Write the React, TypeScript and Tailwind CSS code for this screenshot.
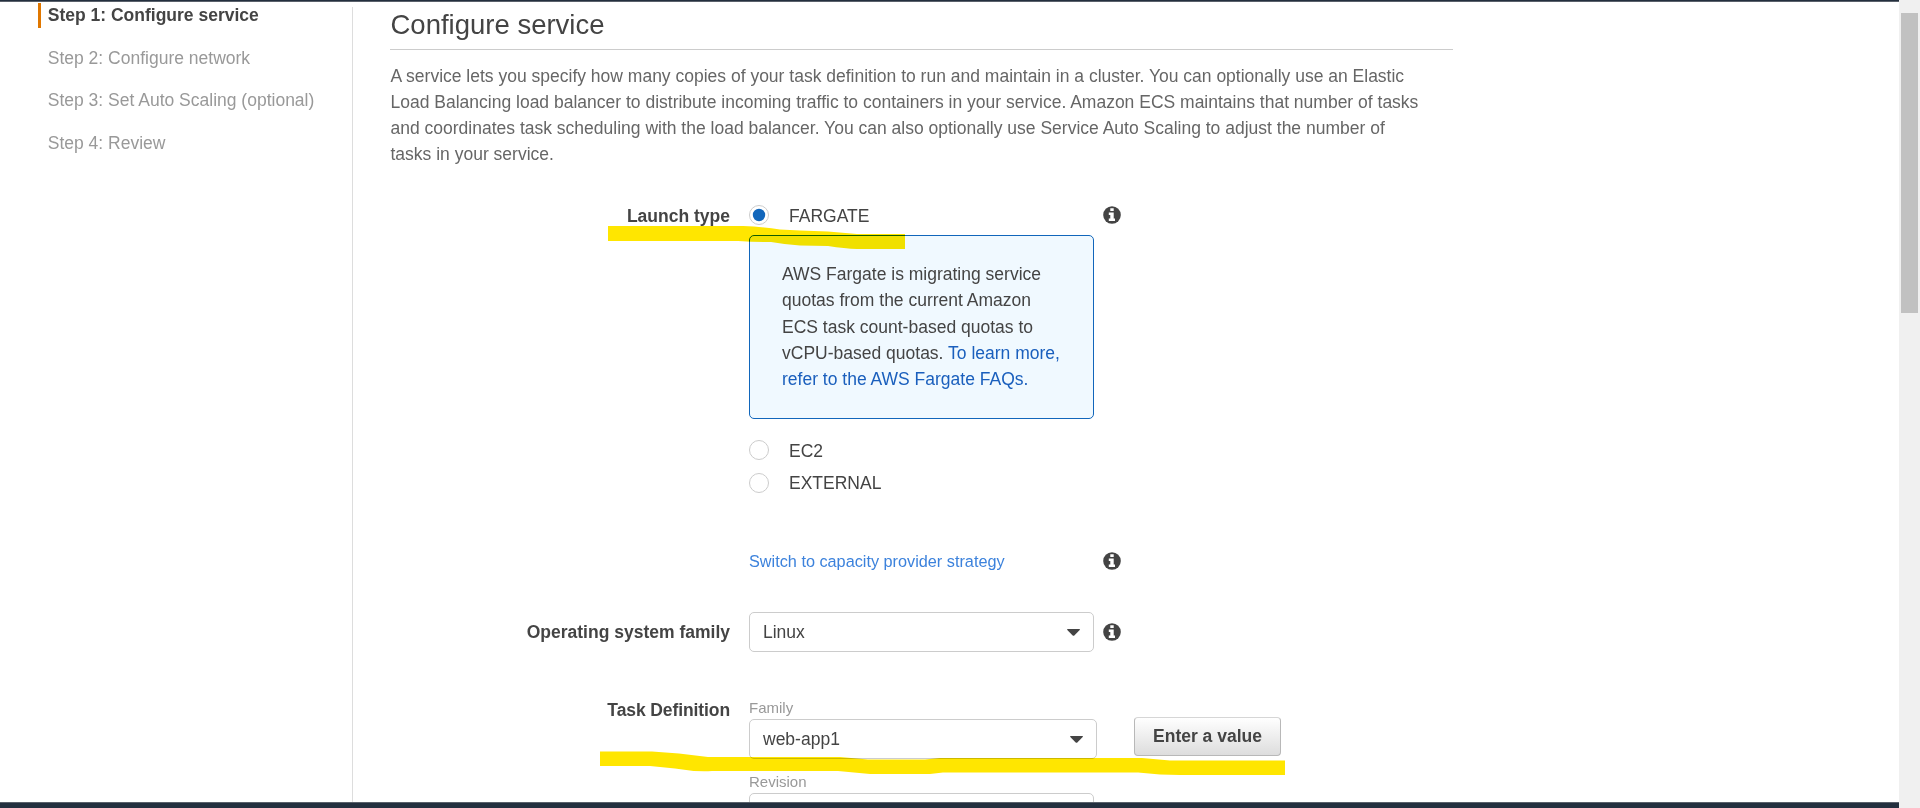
import type { ReactNode } from "react";

const steps = [
  "Step 1: Configure service",
  "Step 2: Configure network",
  "Step 3: Set Auto Scaling (optional)",
  "Step 4: Review",
];

function InfoIcon() {
  return (
    <svg className="block h-[18px] w-[18px] shrink-0" viewBox="0 0 18 18">
      <circle cx="9" cy="9" r="8.8" fill="#444" />
      <path d="M7.3 2.2h3.4v2.9H7.3zM5.8 6.6h4.9v6H12V15H5.8v-2.4h1.5V9H5.8z" fill="#fff" />
    </svg>
  );
}

function Radio({ checked = false }: { checked?: boolean }) {
  return (
    <svg className="block h-5 w-5 shrink-0" viewBox="0 0 20 20">
      <circle cx="10" cy="10" r="9.5" fill="#fff" stroke="#ccc" />
      {checked && <circle cx="10" cy="10" r="6.2" fill="#1166bb" />}
    </svg>
  );
}

function Select({ children, wide = false }: { children?: ReactNode; wide?: boolean }) {
  return (
    <div
      className={`flex h-10 shrink-0 items-center justify-between rounded-[5px] border border-[#ccc] bg-white pl-[13px] pr-[13px] ${
        wide ? "w-[348px]" : "w-[345px]"
      }`}
    >
      <span>{children}</span>
      <svg className="h-[7px] w-[13px]" viewBox="0 0 13 7">
        <path d="M.6 0h11.8q.9.2.3 1L7.3 6.4q-.8.7-1.6 0L.3 1Q-.2.2.6 0Z" fill="#444" />
      </svg>
    </div>
  );
}

function Label({ children }: { children?: ReactNode }) {
  return <div className="w-[340px] shrink-0 text-right font-bold">{children}</div>;
}

export default function App() {
  return (
    <div className="relative flex h-[808px] w-[1920px] overflow-hidden bg-white font-['Liberation_Sans',Arial,sans-serif] text-[17.5px] leading-[26.25px] text-[#444]">
      <div className="flex w-[1899px] flex-col">
        <div className="h-[2px] shrink-0 border-b border-[#5a616b] bg-[#232f3e]" />
        <div className="flex h-[800px] shrink-0 overflow-hidden">
          <nav className="w-[352px] shrink-0 pl-[38px] pt-px">
            {steps.map((step, i) => (
              <div
                key={step}
                className={`mb-[17.5px] h-[25px] whitespace-nowrap border-l-[3px] pl-[6.75px] leading-[24px] ${
                  i === 0 ? "border-[#e07700] font-bold text-[#444]" : "border-transparent text-[#999]"
                }`}
              >
                {step}
              </div>
            ))}
          </nav>
          <div className="mt-[5px] w-px shrink-0 bg-[#ddd]" />
          <main className="ml-[37px] w-[1063px] shrink-0">
            <h1 className="h-[48px] border-b border-[#ccc] pl-[0.5px] pt-[5px] text-[27.5px] leading-[36px]">Configure service</h1>
            <p className="mt-[13px] h-[104px] whitespace-nowrap pl-[0.5px] leading-[26px] text-[#666]">
              A service lets you specify how many copies of your task definition to run and maintain in a cluster. You can optionally use an Elastic
              <br />
              Load Balancing load balancer to distribute incoming traffic to containers in your service. Amazon ECS maintains that number of tasks
              <br />
              and coordinates task scheduling with the load balancer. You can also optionally use Service Auto Scaling to adjust the number of
              <br />
              tasks in your service.
            </p>

            <div className="mt-8 flex h-8 items-center">
              <div className="pt-[2px]">
                <Label>Launch type</Label>
              </div>
              <div className="ml-[19px] flex w-[354px] items-center gap-5">
                <Radio checked />
                <span className="pt-[2px]">FARGATE</span>
              </div>
              <InfoIcon />
            </div>
            <div className="ml-[359px] mt-1 h-[184px] w-[345px] whitespace-nowrap rounded-[5px] border border-[#1166bb] bg-[#f0f9ff] pl-8 pt-[25px]">
              AWS Fargate is migrating service
              <br />
              quotas from the current Amazon
              <br />
              ECS task count-based quotas to
              <br />
              vCPU-based quotas. <span className="text-[#1a5fbd]">To learn more,</span>
              <br />
              <span className="text-[#1a5fbd]">refer to the AWS Fargate FAQs.</span>
            </div>
            <div className="ml-[359px] mt-[15px] flex h-8 items-center gap-5">
              <Radio />
              <span className="pt-[2px]">EC2</span>
            </div>
            <div className="ml-[359px] flex h-[34px] items-center gap-5">
              <Radio />
              <span>EXTERNAL</span>
            </div>
            <div className="ml-[359px] mt-[48px] flex h-[26px] items-center">
              <span className="w-[354px] text-[16.25px] text-[#3c82dc]">Switch to capacity provider strategy</span>
              <div className="pb-px">
                <InfoIcon />
              </div>
            </div>
            <div className="mt-[38px] flex h-10 items-center">
              <Label>Operating system family</Label>
              <div className="ml-[19px] mr-[9px]">
                <Select>Linux</Select>
              </div>
              <InfoIcon />
            </div>
            <div className="mt-[45px] flex">
              <Label>
                <span className="-tracking-[0.1px]">Task Definition</span>
              </Label>
              <div className="ml-[19px]">
                <div className="h-[22px] text-[15px] leading-[22px] text-[#999]">Family</div>
                <Select wide>web-app1</Select>
                <div className="mt-[12px] h-[22px] text-[15px] leading-[22px] text-[#999]">Revision</div>
                <Select />
              </div>
              <button className="ml-[37px] mt-5 flex h-[39px] w-[147px] items-center justify-center rounded-[4px] border border-[#b8b8b8] border-t-[#d6d6d6] bg-linear-to-b from-white to-[#dddddd] font-bold">
                Enter a value
              </button>
            </div>
          </main>
        </div>
        <div className="h-[6px] shrink-0 border-t border-[#5a616b] bg-[#232f3e]" />
      </div>
      <div className="w-[21px] bg-[#f0f0f0] pl-[2px] pt-[13px]">
        <div className="h-[300px] w-[17px] bg-[#c1c1c1]" />
      </div>

      <svg className="pointer-events-none absolute inset-0 h-[808px] w-[1920px] mix-blend-multiply" viewBox="0 0 1920 808">
        <path
          d="M608 226H743Q765 227 780 229.500L800 230.500L828 231.500L857 234H905V249H857Q845 248.500 828 246L800 245.500Q785 244.500 771 242Q755 242 738 241H608Z"
          fill="#ffe600"
        />
        <path
          d="M600 751.500H652L679 753.500L708 757H840L868 759.500H925L940 758H1142L1170 760.500H1285V775H1180L1160 774.500L1138 772.500H943L930 774H870L838 771H712Q695 772 675 768.500L650 766H600Z"
          fill="#ffe600"
        />
      </svg>
    </div>
  );
}
